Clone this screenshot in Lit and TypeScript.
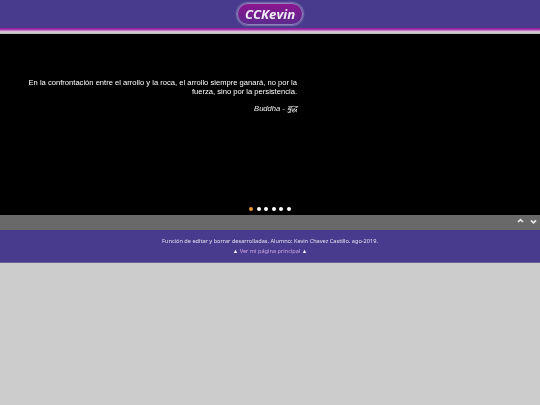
import { LitElement, html, css } from "lit";
import { customElement } from "lit/decorators.js";

@customElement("app-root")
export class AppRoot extends LitElement {
  static styles = css`
    :host { display: block; width: 540px; height: 405px; background: #cccccc; font-family: "Noto Sans", sans-serif; overflow: hidden; }
    .head { height: 28px; background: #483a8c; display: flex; justify-content: center; align-items: center; }
    .logo { width: 66px; height: 22px; box-sizing: border-box; border-radius: 11px; border: 1px solid #8d81bb; box-shadow: 0 0 1.5px 1px #7f73b2; background: linear-gradient(#8c1590, #5c2a8c); color: #f0ecf6; font-family: "Open Sans", sans-serif; font-style: italic; font-weight: 700; font-size: 13.2px; display: flex; align-items: center; justify-content: center; will-change: transform; }
    .stripe { height: 6px; background: linear-gradient(#8c1c96 0, #a83cac 30%, #d8a8d8 50%, #d4d0d4 67%, #b4b4b4 100%); }
    .slide { height: 181px; background: #000; box-sizing: border-box; padding: 44px 0 4px 26px; display: flex; flex-direction: column; }
    .quote { width: 271px; text-align: right; color: #fff; font-family: "Liberation Sans", sans-serif; font-size: 7.6px; line-height: 9.4px; will-change: transform; }
    .quote p { margin: 0; }
    .quote .by { margin-top: 7px; font-style: italic; color: #eee; }
    .dots { margin-top: auto; align-self: center; margin-left: -26px; display: flex; gap: 3.5px; }
    .dot { width: 4px; height: 4px; border-radius: 50%; background: #fff; }
    .dot.on { background: #e8962e; }
    .bar { height: 15px; background: #696969; display: flex; justify-content: flex-end; align-items: flex-start; gap: 5.5px; padding: 3px 3.5px 0 0; box-sizing: border-box; }
    .bar svg { width: 7px; height: 6px; display: block; }
    .foot { height: 33px; background: #483a8c; box-sizing: border-box; border-bottom: 1px solid #6a6198; padding-top: 7px; text-align: center; color: #e4dff0; font-size: 5.6px; line-height: 9.5px; will-change: transform; }
    .foot p { margin: 0; }
    .link { color: #c9a6e2; }
    .tri { color: #f2f0f8; }
  `;

  render() {
    return html`
      <div class="head"><div class="logo">CCKevin</div></div>
      <div class="stripe"></div>
      <div class="slide">
        <div class="quote">
          <p>En la confrontación entre el arrollo y la roca, el arrollo siempre ganará, no por la fuerza, sino por la persistencia.</p>
          <p class="by">Buddha - बुद्ध</p>
        </div>
        <div class="dots">
          <span class="dot on"></span><span class="dot"></span><span class="dot"></span><span class="dot"></span><span class="dot"></span><span class="dot"></span>
        </div>
      </div>
      <div class="bar">
        <svg viewBox="0 0 7 6"><path d="M1 4 L3.5 1.6 L6 4" fill="none" stroke="#e8e8e8" stroke-width="1.7"/></svg>
        <svg viewBox="0 0 7 6"><path d="M1 2.4 L3.5 4.8 L6 2.4" fill="none" stroke="#e8e8e8" stroke-width="1.7"/></svg>
      </div>
      <div class="foot">
        <p>Función de editar y borrar desarrolladas. Alumno: Kevin Chavez Castillo. ago-2019.</p>
        <p><span class="tri">▲</span> <span class="link">Ver mi página principal</span> <span class="tri">▲</span></p>
      </div>
    `;
  }
}
